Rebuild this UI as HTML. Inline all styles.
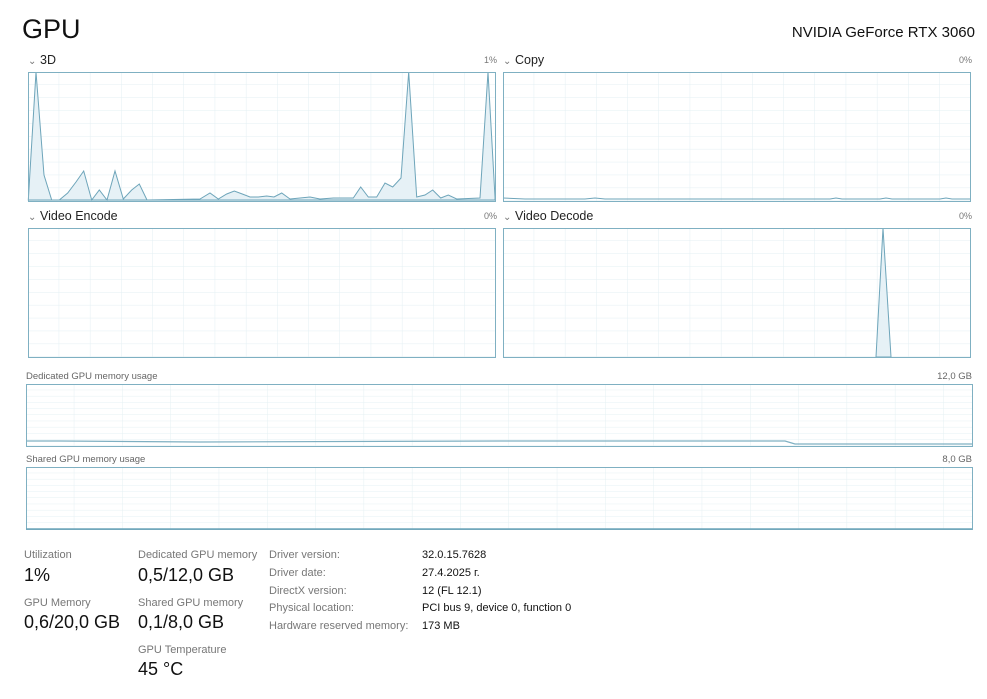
<!DOCTYPE html>
<html><head><meta charset="utf-8"><style>
html,body{margin:0;padding:0;background:#fff;}
svg{display:block;font-family:"Liberation Sans",sans-serif;}
</style></head><body>
<svg width="987" height="699" viewBox="0 0 987 699" xmlns="http://www.w3.org/2000/svg">
<defs>
<pattern id="g1" x="28" y="72" width="31.2" height="12.9" patternUnits="userSpaceOnUse"><path d="M31.2 0V12.9M0 12.9H31.2" stroke="#e3eff3" stroke-width="1" fill="none"/></pattern>
<pattern id="g2" x="503" y="72" width="31.2" height="12.9" patternUnits="userSpaceOnUse"><path d="M31.2 0V12.9M0 12.9H31.2" stroke="#e3eff3" stroke-width="1" fill="none"/></pattern>
<pattern id="g3" x="28" y="228" width="31.2" height="12.9" patternUnits="userSpaceOnUse"><path d="M31.2 0V12.9M0 12.9H31.2" stroke="#e3eff3" stroke-width="1" fill="none"/></pattern>
<pattern id="g4" x="503" y="228" width="31.2" height="12.9" patternUnits="userSpaceOnUse"><path d="M31.2 0V12.9M0 12.9H31.2" stroke="#e3eff3" stroke-width="1" fill="none"/></pattern>
<pattern id="g5" x="26" y="384" width="48.3" height="6.2" patternUnits="userSpaceOnUse"><path d="M48.3 0V6.2M0 6.2H48.3" stroke="#e5f0f3" stroke-width="1" fill="none"/></pattern>
<pattern id="g6" x="26" y="467" width="48.3" height="6.2" patternUnits="userSpaceOnUse"><path d="M48.3 0V6.2M0 6.2H48.3" stroke="#e5f0f3" stroke-width="1" fill="none"/></pattern>
</defs>
<text x="22" y="38" font-size="27" fill="#111">GPU</text>
<text x="975" y="37" font-size="15" fill="#111" text-anchor="end">NVIDIA GeForce RTX 3060</text>

<g font-size="12.5" fill="#222">
<text x="28" y="64" fill="#777" font-size="10">⌄</text><text x="40" y="64">3D</text>
<text x="497" y="63" font-size="9" fill="#777" text-anchor="end">1%</text>
<text x="503" y="64" fill="#777" font-size="10">⌄</text><text x="515" y="64">Copy</text>
<text x="972" y="63" font-size="9" fill="#777" text-anchor="end">0%</text>
<text x="28" y="220" fill="#777" font-size="10">⌄</text><text x="40" y="220">Video Encode</text>
<text x="497" y="219" font-size="9" fill="#777" text-anchor="end">0%</text>
<text x="503" y="220" fill="#777" font-size="10">⌄</text><text x="515" y="220">Video Decode</text>
<text x="972" y="219" font-size="9" fill="#777" text-anchor="end">0%</text>
</g>

<rect x="28" y="72" width="467" height="129" fill="url(#g1)"/>
<rect x="503" y="72" width="467" height="129" fill="url(#g2)"/>
<rect x="28" y="228" width="467" height="129" fill="url(#g3)"/>
<rect x="503" y="228" width="467" height="129" fill="url(#g4)"/>

<polygon fill="#e6f1f6" stroke="#6ea5ba" stroke-width="1" points="28.3,200 36,72 44,175 51.7,200 59.3,200 67.7,193 76,182 83.7,171 91.7,200 99.3,190 107,200 115,171 123.3,199 131.7,190 139.3,184 147,200 200,199 210,193 218.3,199 226.7,194 234.3,191 242.3,194 250,197 258.3,197 266.7,196 274,197 281.7,193 290,199 310,197 320,199 333.3,198 353.3,198 360.7,187 368.3,197 376.7,197 385,183 392.7,187 401,178 408.7,72 416.7,197 425,195 432.7,190 440.7,198 448.3,195 456.7,199 480,198 488,72 495,197 495,200"/>
<polyline fill="none" stroke="#6ea5ba" stroke-width="1" points="503,198 525,199 585,199 595,198 605,199 830,199 836,198 842,199 880,199 886,198 892,199 940,199 946,198 952,199 970,199"/>
<polygon fill="#e6f1f6" stroke="#6ea5ba" stroke-width="1" points="876,357 883,228 891,357"/>

<rect x="28.5" y="72.5" width="467" height="129" fill="none" stroke="#7fb0c2"/>
<rect x="503.5" y="72.5" width="467" height="129" fill="none" stroke="#7fb0c2"/>
<rect x="28.5" y="228.5" width="467" height="129" fill="none" stroke="#7fb0c2"/>
<rect x="503.5" y="228.5" width="467" height="129" fill="none" stroke="#7fb0c2"/>

<text x="26" y="379" font-size="9.5" fill="#666">Dedicated GPU memory usage</text>
<text x="972" y="379" font-size="9.5" fill="#666" text-anchor="end">12,0 GB</text>
<rect x="26" y="384" width="946" height="62" fill="url(#g5)"/>
<polyline fill="none" stroke="#7fb0c2" stroke-width="1.2" points="26,441 60,441 200,442 500,441 785,441 795,444 972,444"/>
<rect x="26.5" y="384.5" width="946" height="62" fill="none" stroke="#7fb0c2"/>

<text x="26" y="462" font-size="9.5" fill="#666">Shared GPU memory usage</text>
<text x="972" y="462" font-size="9.5" fill="#666" text-anchor="end">8,0 GB</text>
<rect x="26" y="467" width="946" height="62" fill="url(#g6)"/>
<rect x="26.5" y="467.5" width="946" height="62" fill="none" stroke="#7fb0c2"/>
<line x1="26" y1="529" x2="972" y2="529" stroke="#6ea5ba" stroke-width="1.5"/>

<g font-size="11" fill="#777">
<text x="24" y="558">Utilization</text>
<text x="24" y="606">GPU Memory</text>
<text x="138" y="558">Dedicated GPU memory</text>
<text x="138" y="606">Shared GPU memory</text>
<text x="138" y="653">GPU Temperature</text>
<text x="269" y="558">Driver version:</text>
<text x="269" y="576">Driver date:</text>
<text x="269" y="594">DirectX version:</text>
<text x="269" y="611">Physical location:</text>
<text x="269" y="629">Hardware reserved memory:</text>
</g>
<g font-size="18" fill="#111">
<text x="24" y="581">1%</text>
<text x="24" y="628">0,6/20,0 GB</text>
<text x="138" y="581">0,5/12,0 GB</text>
<text x="138" y="628">0,1/8,0 GB</text>
<text x="138" y="675">45 °C</text>
</g>
<g font-size="11" fill="#111">
<text x="422" y="558">32.0.15.7628</text>
<text x="422" y="576">27.4.2025 г.</text>
<text x="422" y="594">12 (FL 12.1)</text>
<text x="422" y="611">PCI bus 9, device 0, function 0</text>
<text x="422" y="629">173 MB</text>
</g>
</svg>
</body></html>
